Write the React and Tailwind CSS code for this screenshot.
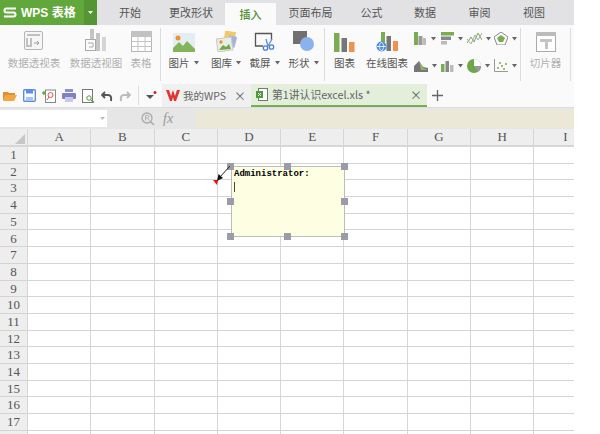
import React from 'react';

const tabs = [
  ['开始', 'w-[54px]'],
  ['更改形状', 'w-[68px]'],
  ['插入', 'w-[51px]'],
  ['页面布局', 'w-[69px]'],
  ['公式', 'w-[53px]'],
  ['数据', 'w-[54px]'],
  ['审阅', 'w-[55px]'],
  ['视图', 'w-[54px]'],
];
const columns = ['A', 'B', 'C', 'D', 'E', 'F', 'G', 'H', 'I'];
const rows = Array.from({ length: 17 }, (_, i) => i + 1);
const handles = [
  'left-[-5px] top-[-4px]', 'left-[52px] top-[-4px]', 'left-[109px] top-[-4px]',
  'left-[-5px] top-[31px]', 'left-[109px] top-[31px]',
  'left-[-5px] top-[66px]', 'left-[52px] top-[66px]', 'left-[109px] top-[66px]',
];

const Caret = () => (
  <svg width="7" height="4" viewBox="0 0 7 4" className="shrink-0"><path d="M1 0h5L3.5 3.5z" fill="#666" /></svg>
);

const PivotIcon = () => (
  <svg width="22" height="22" viewBox="0 0 22 22" fill="none">
    <rect x="1.5" y="1.5" width="18" height="18" rx="1.5" fill="#f6f6f6" stroke="#b5b5b5" />
    <path d="M4 5h13M4 8v8h4V8" stroke="#c0c0c0" strokeWidth="2" />
    <path d="M11 13h5M14 11l2 2-2 2" stroke="#999" />
  </svg>
);
const PivotChartIcon = () => (
  <svg width="24" height="24" viewBox="0 0 24 24">
    <rect x="6" y="1" width="4" height="12" fill="#c4c4c4" />
    <rect x="12" y="5" width="4" height="18" fill="#c4c4c4" />
    <rect x="18" y="9" width="4" height="14" fill="#d5d5d5" />
    <rect x="1.5" y="11.5" width="10" height="11" fill="#fafafa" stroke="#aaa" />
    <path d="M4 15h5v4H5" stroke="#aaa" fill="none" />
  </svg>
);
const TableIcon = () => (
  <svg width="21" height="21" viewBox="0 0 21 21" fill="none">
    <rect x="0.5" y="0.5" width="20" height="20" fill="#fff" stroke="#b5b5b5" />
    <rect x="0" y="0" width="21" height="6" fill="#c2c2c2" />
    <path d="M0 10.5h21M0 15.5h21M7 6v15M14 6v15" stroke="#c4c4c4" />
  </svg>
);
const PictureIcon = () => (
  <svg width="22" height="19" viewBox="0 0 22 19">
    <rect width="22" height="19" fill="#e4eef2" />
    <circle cx="5" cy="5" r="2.5" fill="#f0913a" />
    <path d="M0 19v-4l6-6 4 4 4-5 8 8v3z" fill="#83b35a" />
  </svg>
);
const GalleryIcon = () => (
  <svg width="22" height="21" viewBox="0 0 22 21">
    <rect x="8" y="0" width="11" height="14" fill="#f4c86a" transform="rotate(10 12 7)" />
    <rect x="12" y="5" width="8" height="11" fill="#a3b3dd" transform="rotate(14 16 10)" />
    <rect x="1" y="7" width="15" height="13" fill="#e8eee6" stroke="#c9c9c9" transform="rotate(-8 8 13)" />
    <circle cx="5" cy="11" r="1.7" fill="#ef8f3b" />
    <path d="M3 19l4-5 3 2 3-3 2 5z" fill="#6fa648" />
  </svg>
);
const ScreenshotIcon = () => (
  <svg width="22" height="20" viewBox="0 0 22 20" fill="none">
    <path d="M9 14H1.5V1.5h16V8" stroke="#555" strokeWidth="1.3" />
    <path d="M12 7l2 7M18 7l-4 7" stroke="#5a8de0" strokeWidth="1.3" />
    <circle cx="11.5" cy="16" r="2.2" stroke="#4a80dc" strokeWidth="1.3" />
    <circle cx="17.5" cy="15" r="2.2" stroke="#4a80dc" strokeWidth="1.3" />
  </svg>
);
const ShapeIcon = () => (
  <svg width="22" height="22" viewBox="0 0 22 22">
    <rect x="0" y="1" width="14" height="13" fill="#707070" />
    <circle cx="14" cy="14" r="7" fill="#8cb2ee" />
  </svg>
);
const BarsIcon = () => (
  <svg width="21" height="19" viewBox="0 0 21 19">
    <rect x="0" y="0" width="5.5" height="19" fill="#79ad50" />
    <rect x="7.5" y="5" width="5.5" height="14" fill="#777" />
    <rect x="15" y="9" width="5.5" height="10" fill="#f2914e" />
  </svg>
);
const OnlineChartIcon = () => (
  <svg width="22" height="20" viewBox="0 0 22 20">
    <rect x="5" y="0" width="4" height="14" fill="#79ad50" />
    <rect x="10.5" y="4" width="4.5" height="15" fill="#777" />
    <rect x="17" y="9" width="5" height="10" fill="#f2914e" />
    <circle cx="5.5" cy="14.5" r="5" fill="#4f8de0" />
    <path d="M1 14.5h9M5.5 10c-3 3-3 6 0 9M5.5 10c3 3 3 6 0 9" stroke="#fff" strokeWidth="0.8" fill="none" />
  </svg>
);

const miniCharts = [
  <svg key="a" width="13" height="13" viewBox="0 0 13 13"><rect x="0" y="0" width="4" height="13" fill="#79ad50" /><rect x="4.5" y="4" width="4" height="9" fill="#999" /><rect x="9" y="6" width="3" height="7" fill="#bbb" /></svg>,
  <svg key="b" width="13" height="13" viewBox="0 0 13 13"><rect width="13" height="3.5" fill="#79ad50" /><rect y="4.5" width="10" height="3.5" fill="#888" /><rect y="9" width="6" height="3.5" fill="#bbb" /></svg>,
  <svg key="c" width="15" height="13" viewBox="0 0 15 13" fill="none"><path d="M0 11l4-6 3 5 4-9 4 7" stroke="#79ad50" /><path d="M0 7l4 5 4-9 3 5 4-7" stroke="#aaa" /></svg>,
  <svg key="d" width="14" height="13" viewBox="0 0 14 13" fill="none"><path d="M7 0l7 5-3 8H3L0 5z" stroke="#888" /><path d="M7 3l4 3-2 4H5L3 6z" fill="#79ad50" /></svg>,
  <svg key="e" width="14" height="12" viewBox="0 0 14 12"><path d="M0 12V6l5-5 4 6 5 1v4z" fill="#777" /><path d="M5 1l4 7 5 2H7z" fill="#8dbb60" /></svg>,
  <svg key="f" width="13" height="13" viewBox="0 0 13 13"><rect x="0" y="5" width="3.5" height="8" fill="#79ad50" /><rect x="4.5" y="2" width="3.5" height="11" fill="#888" /><rect x="9" y="6" width="3.5" height="7" fill="#bbb" /></svg>,
  <svg key="g" width="14" height="14" viewBox="0 0 14 14"><circle cx="7" cy="7" r="7" fill="#6fa648" /><path d="M7 7V0a7 7 0 0 1 7 7z" fill="#fff" /><path d="M7 7h7a7 7 0 0 1-3 6z" fill="#999" /></svg>,
  <svg key="h" width="14" height="13" viewBox="0 0 14 13" fill="none"><path d="M0.5 0v12.5H14" stroke="#999" /><path d="M3 9h2M7 7h2M11 5h2M5 4h2M9 10h2" stroke="#79ad50" strokeWidth="1.5" /></svg>,
];

const BigItem = ({ icon, label, width, caret, dim }) => (
  <div className={`flex flex-col items-center shrink-0 ${width}`}>
    <div className="h-[27px] flex items-end justify-center">{icon}</div>
    <div className={`mt-[4px] flex items-center gap-[3px] text-[10.5px] leading-[14px] whitespace-nowrap ${dim ? 'text-[#b0b0b0]' : 'text-[#555]'}`}>
      <span>{label}</span>
      {caret && <Caret />}
    </div>
  </div>
);

const Sep = () => <div className="w-px h-[53px] mt-[3px] bg-[#dcdcdc] shrink-0" />;

export default function App() {
  return (
    <div className="w-[600px] h-[434px] overflow-hidden bg-white" style={{ fontFamily: '"Noto Sans CJK SC", "Noto Sans", sans-serif' }}>
      <div className="w-[574px] h-full flex flex-col">
        {/* tab strip */}
        <div className="h-[25px] flex bg-[#e2e2e4] shrink-0">
          <div className="w-[97px] flex bg-[#62a73b] text-white shrink-0">
            <div className="w-[84px] flex items-center pl-[3px] gap-[4px] font-bold text-[12px]">
              <svg width="14" height="11" viewBox="0 0 14 11" fill="none"><path d="M13 1.5H3.5Q1.5 1.5 1.5 3.500T3.5 5.5h7Q12.5 5.5 12.5 7.500T10.5 9.5H1" stroke="#fff" strokeWidth="2" /></svg>
              <span className="whitespace-nowrap" style={{ fontFamily: '"Liberation Sans", "Noto Sans CJK SC", sans-serif' }}>WPS 表格</span>
            </div>
            <div className="w-[13px] bg-[#559534] flex items-center justify-center">
              <svg width="5" height="3" viewBox="0 0 5 3"><path d="M0 0h5L2.5 3z" fill="#fff" /></svg>
            </div>
          </div>
          <div className="w-[6px] shrink-0" />
          {tabs.map(([name, w]) => {
            const on = name === '插入';
            return (
              <div key={name} className={`${w} shrink-0 flex items-center justify-center text-[11px] ${on ? 'mt-[3px] bg-[#fafafa] text-[#4f8f2f] font-medium' : 'text-[#555]'}`}>
                {name}
              </div>
            );
          })}
        </div>

        {/* ribbon */}
        <div className="h-[59px] bg-[#fafafa] flex items-start shrink-0">
          <BigItem icon={<PivotIcon />} label="数据透视表" width="w-[68px]" dim />
          <BigItem icon={<PivotChartIcon />} label="数据透视图" width="w-[56px]" dim />
          <BigItem icon={<TableIcon />} label="表格" width="w-[34px]" dim />
          <div className="w-[2px]" />
          <Sep />
          <BigItem icon={<PictureIcon />} label="图片" caret width="w-[46px]" />
          <BigItem icon={<GalleryIcon />} label="图库" caret width="w-[39px]" />
          <BigItem icon={<ScreenshotIcon />} label="截屏" caret width="w-[38px]" />
          <BigItem icon={<ShapeIcon />} label="形状" caret width="w-[40px]" />
          <Sep />
          <BigItem icon={<BarsIcon />} label="图表" width="w-[39px]" />
          <BigItem icon={<OnlineChartIcon />} label="在线图表" width="w-[46px]" />
          <div className="w-[110px] shrink-0 pl-[4px] pt-[6px] grid grid-cols-4 gap-y-[12px]">
            {miniCharts.map((c) => (
              <div key={c.key} className="flex items-center gap-[3px] h-[15px] w-[26px]">
                {c}
                <Caret />
              </div>
            ))}
          </div>
          <Sep />
          <BigItem icon={
            <svg width="20" height="20" viewBox="0 0 20 20" fill="none">
              <rect x="0.5" y="0.5" width="19" height="19" fill="#fff" stroke="#aaa" />
              <rect width="20" height="4" fill="#bbb" />
              <path d="M4 7h12v3h-4v7H9v-7H4z" fill="#c4c4c4" />
            </svg>
          } label="切片器" width="w-[49px]" dim />
          <Sep />
        </div>

        {/* quick access + doc tabs */}
        <div className="h-[23px] bg-[#fafafa] flex items-center shrink-0 pl-[3px]">
          <div className="w-[135px] flex items-center justify-between pr-[7px] shrink-0">
            <svg width="14" height="12" viewBox="0 0 14 12"><path d="M0 2h5l1 1h6v2H3L0 11z" fill="#e0902f" /><path d="M3 5h11l-3 6H0z" fill="#f6a543" /></svg>
            <svg width="13" height="13" viewBox="0 0 13 13" fill="none"><rect x="0.7" y="0.7" width="11.6" height="11.6" rx="1" stroke="#5b8fe0" strokeWidth="1.4" fill="#fff" /><rect x="3" y="1" width="7" height="3.5" fill="#5b8fe0" /><rect x="3" y="8" width="7" height="4" fill="#a9c5ef" /></svg>
            <svg width="14" height="14" viewBox="0 0 14 14" fill="none"><rect x="3.5" y="1" width="10" height="12.5" stroke="#888" fill="#fff" /><circle cx="8.5" cy="6" r="2.5" stroke="#d9534f" /><path d="M7 8l-2 3" stroke="#d9534f" /><path d="M0 4h4M2 2v4" stroke="#5ba84a" strokeWidth="1.3" /></svg>
            <svg width="14" height="13" viewBox="0 0 14 13"><rect x="3" y="0" width="8" height="3" fill="#8d8fc9" /><rect x="0" y="4" width="14" height="6" rx="1" fill="#7f81c2" /><rect x="3" y="8" width="8" height="5" fill="#c9cae8" /></svg>
            <svg width="13" height="14" viewBox="0 0 13 14" fill="none"><rect x="0.5" y="0.5" width="10" height="13" stroke="#777" fill="#fff" /><circle cx="7" cy="9" r="2.2" stroke="#4f9a3c" /><path d="M9 11l3 2.5" stroke="#4f9a3c" strokeWidth="1.3" /></svg>
            <svg width="12" height="12" viewBox="0 0 12 12" fill="none"><path d="M4 2L1 5l3 3" stroke="#555" strokeWidth="1.8" /><path d="M1.5 5H7q4 0 3 6" stroke="#555" strokeWidth="2" /></svg>
            <svg width="12" height="12" viewBox="0 0 12 12" fill="none"><path d="M8 2l3 3-3 3" stroke="#bbb" strokeWidth="1.8" /><path d="M10.5 5H5q-4 0-3 6" stroke="#bbb" strokeWidth="2" /></svg>
          </div>
          <div className="w-px h-[19px] bg-[#dcdcdc] shrink-0" />
          <div className="w-[23px] flex items-center justify-center shrink-0 relative">
            <svg width="12" height="9" viewBox="0 0 12 9"><path d="M1 4h8L5 8z" fill="#555" /><circle cx="10" cy="1.5" r="1.5" fill="#e02020" /></svg>
          </div>
          <div className="w-[89px] h-[23px] bg-[#f0f0f0] flex items-center pl-[4px] text-[10.5px] text-[#666] shrink-0">
            <svg width="14" height="11" viewBox="0 0 14 11"><path d="M0 0h3l2 6 2-6 2 6 2-6h3l-4 11H8L7 7l-1 4H4z" fill="#e0342f" /></svg>
            <span className="ml-[3px] whitespace-nowrap">我的WPS</span>
            <span className="ml-auto mr-[5px] text-[#666] text-[12px] leading-none">×</span>
          </div>
          <div className="w-[176px] h-[23px] bg-[#e3eedb] border-b-2 border-[#79ad50] flex items-center pl-[5px] text-[10.8px] text-[#666] shrink-0">
            <svg width="12" height="13" viewBox="0 0 12 13" fill="none"><rect x="2.5" y="0.5" width="9" height="12" stroke="#777" fill="#fff" /><rect x="0" y="3" width="7" height="7" fill="#4f9a3c" /><path d="M2 5l3 3M5 5L2 8" stroke="#fff" /></svg>
            <span className="ml-[4px] whitespace-nowrap">第1讲认识excel.xls *</span>
            <span className="ml-auto mr-[5px] text-[#666] text-[12px] leading-none">×</span>
          </div>
          <svg width="11" height="11" viewBox="0 0 11 11" className="ml-[5px]"><path d="M5.5 0v11M0 5.5h11" stroke="#666" strokeWidth="1.3" /></svg>
        </div>

        {/* formula bar */}
        <div className="h-[22px] bg-[#e6e6e6] flex items-center shrink-0 border-t border-[#dcdcdc]">
          <div className="w-[107px] h-[17px] bg-white flex items-center justify-end pr-[2px] shrink-0">
            <svg width="5" height="3" viewBox="0 0 5 3"><path d="M0 0h5L2.5 3z" fill="#bbb" /></svg>
          </div>
          <div className="w-[88px] flex items-center shrink-0 pl-[34px]">
            <svg width="14" height="14" viewBox="0 0 14 14" fill="none"><circle cx="6" cy="6" r="5" stroke="#aaa" strokeWidth="1.3" /><path d="M9.5 9.5L13 13" stroke="#aaa" strokeWidth="1.6" /><path d="M4.5 8.500v-5H7a1.300 1.300 0 0 1 0 2.500H4.500M6.500 6l1.500 2.500" stroke="#aaa" strokeWidth="0.8" /></svg>
            <span className="ml-[8px] text-[14px] leading-none italic text-[#999]" style={{ fontFamily: '"Liberation Serif", serif' }}>fx</span>
          </div>
          <div className="flex-1 h-[18px] bg-[#ebe8d8]" />
        </div>

        {/* sheet */}
        <div className="flex-1 min-h-0 relative overflow-hidden" style={{ fontFamily: '"Liberation Serif", serif' }}>
          <div className="h-[16px] flex bg-[#eeeeee] border-b-2 border-[#d6d6d6] box-content">
            <div className="w-[28px] shrink-0 border-r border-[#d6d6d6] relative">
              <svg width="10" height="10" viewBox="0 0 10 10" className="absolute right-[2px] bottom-[1px]"><path d="M10 0v10H0z" fill="#c6c6c6" /></svg>
            </div>
            {columns.map((c) => (
              <div key={c} className="w-[63.3px] shrink-0 border-r border-[#d6d6d6] flex items-center justify-center text-[13px] text-[#555]">{c}</div>
            ))}
          </div>
          {rows.map((n) => (
            <div key={n} className="h-[16.7px] flex border-b border-[#d4d4d4]">
              <div className="w-[28px] shrink-0 bg-[#eeeeee] border-r border-[#d6d6d6] flex items-center justify-center text-[13px] text-[#555]">{n}</div>
              {columns.map((c) => (
                <div key={c} className="w-[63.3px] shrink-0 border-r border-[#d6d6d6]" />
              ))}
            </div>
          ))}
          <div className="h-[8px] flex">
            <div className="w-[28px] shrink-0 bg-[#eeeeee] border-r border-[#d6d6d6]" />
            {columns.map((c) => (
              <div key={c} className="w-[63.3px] shrink-0 border-r border-[#d6d6d6]" />
            ))}
          </div>

          {/* comment box */}
          <div className="absolute left-[231px] top-[37px] w-[114px] h-[71px] bg-[#fefee2] border border-[#bdbdbd] pl-[2px] pt-[2px]">
            <div className="text-[9px] leading-[10px] font-bold text-black whitespace-nowrap" style={{ fontFamily: '"Liberation Mono", monospace' }}>Administrator:</div>
            <div className="w-px h-[10px] bg-[#444] mt-[3px]" />
            {handles.map((h) => (
              <div key={h} className={`absolute ${h} w-[7px] h-[7px] bg-[#9a9da8]`} />
            ))}
          </div>
          <svg width="20" height="24" viewBox="0 0 20 24" className="absolute left-[212px] top-[33px]">
            <path d="M1 18h5l-1 5z" fill="#f01010" />
            <path d="M18 4L8 15" stroke="#222" />
            <path d="M5 19l1.500-7 4.500 4z" fill="#111" />
          </svg>
        </div>
      </div>
    </div>
  );
}
